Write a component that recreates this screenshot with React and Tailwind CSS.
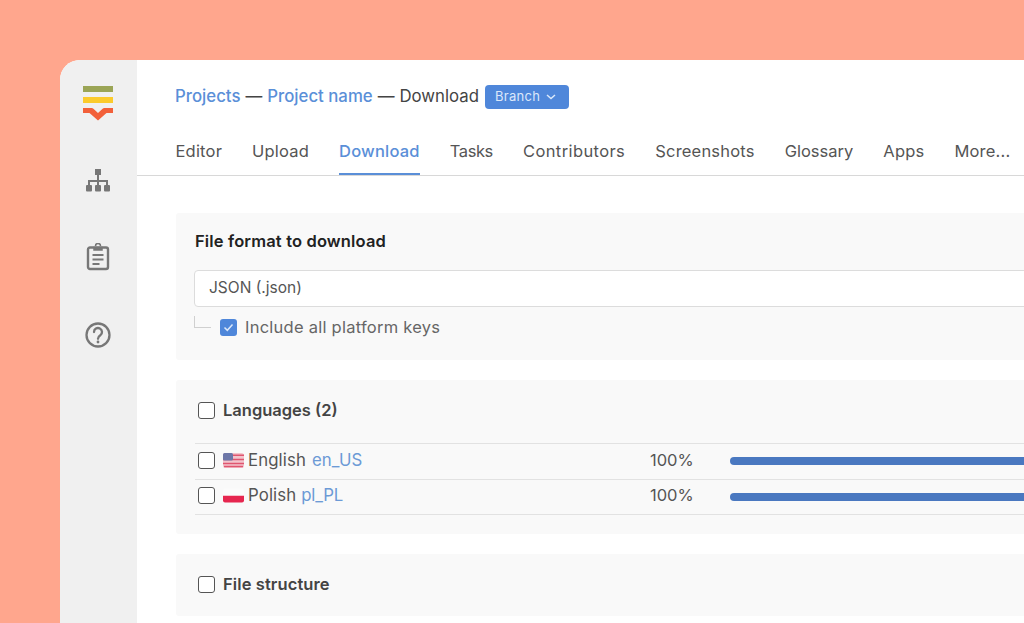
import React from "react";

const Box = () => <span className="block w-[17px] h-[17px] shrink-0 rounded-[3px] border-[1.5px] border-[#555] bg-white" />;

const UsFlag = () => (
  <svg width="21" height="15" viewBox="0 0 21 15" className="shrink-0">
    <rect width="21" height="15" rx="2.5" fill="#f3c4cc" />
    <path d="M0 2.2h21M0 6.5h21M0 10.5h21M1 13.5h19" stroke="#e0556f" strokeWidth="1.4" />
    <rect width="10" height="7.5" rx="1.5" fill="#6d77a8" />
  </svg>
);

const PlFlag = () => (
  <svg width="21" height="15" viewBox="0 0 21 15" className="shrink-0">
    <path d="M0 7.5h21v5a2 2 0 0 1-2 2H2a2 2 0 0 1-2-2z" fill="#e6264f" />
    <path d="M0 7.5v-5a2 2 0 0 1 2-2h17a2 2 0 0 1 2 2v5z" fill="#fbfbfb" />
  </svg>
);

const Row = ({ flag, name, code, codeClass }) => (
  <div className="flex items-center h-[35.5px] pb-[2px] border-b border-[#e2e2e2] text-[16.8px] text-[#555]">
    <div className="w-[455px] flex items-center shrink-0">
      <span className="ml-[3px]"><Box /></span>
      <span className="ml-[8px] mr-[4px] flex">{flag}</span>
      <span className="tracking-[0.1px]">{name}</span>
      <span className={"text-[#6c9ad6] " + codeClass}>{code}</span>
    </div>
    <span className="w-[80px] shrink-0 text-[16.5px] text-[#555]">100%</span>
    <div className="h-[8px] mt-[2px] flex-1 rounded-full bg-[#4a78c0]" />
  </div>
);

const tabs = [
  ["Editor", "tracking-[0.2px]"],
  ["Upload", "tracking-[0.2px]"],
  ["Download", "tracking-[0.2px]"],
  ["Tasks", "tracking-[-0.4px]"],
  ["Contributors", "tracking-[0.4px]"],
  ["Screenshots", "tracking-[0.2px]"],
  ["Glossary", "tracking-[0px]"],
  ["Apps", "tracking-[0.2px]"],
  ["More...", "tracking-[0.2px]"],
];

export default function App() {
  return (
    <div className="w-[1024px] h-[623px] overflow-hidden bg-[#ffa68d] pt-[60px] pl-[60px] [font-family:Inter,'Liberation_Sans',sans-serif]">
      <div className="flex h-[600px] w-[1000px] rounded-tl-[20px] overflow-hidden bg-white">
        <aside className="w-[77px] shrink-0 bg-[#f0f0f0] flex flex-col items-center pt-[25px] pr-[2px]">
          <svg width="32" height="37" viewBox="0 0 32 37">
            <rect x="1" y="1" width="30" height="6" fill="#9ba556" />
            <rect x="1" y="12" width="30" height="6" fill="#fbcb2c" />
            <path d="M1 23h8.5a3 3 0 0 1 2.2 1L16 28l4.3-4a3 3 0 0 1 2.2-1H31v5h-6.5L16 35.5 7.5 28H1z" fill="#f2603a" />
          </svg>
          <svg width="26" height="26" viewBox="0 0 26 26" className="mt-[46px]" fill="#777">
            <rect x="10" y="1" width="6" height="6" />
            <rect x="12" y="6" width="2" height="14" />
            <path d="M3 17v-5h20v5h-2v-3H5v3z" />
            <rect x="1" y="17" width="6" height="6.5" rx="1" />
            <rect x="10" y="17" width="6" height="6.5" rx="1" />
            <rect x="19" y="17" width="6" height="6.5" rx="1" />
          </svg>
          <svg width="26" height="28" viewBox="0 0 26 28" className="mt-[49px]" fill="none" stroke="#777" strokeWidth="2.4">
            <rect x="3" y="4.5" width="20" height="21.5" rx="2" />
            <path d="M9 4.5h8V7H9z" fill="#777" strokeWidth="1.5" />
            <path d="M10.5 3a2.5 2.5 0 0 1 5 0" strokeWidth="1.6" />
            <path d="M7.5 12h11M7.5 16.5h11M7.5 21h7" strokeWidth="2" />
          </svg>
          <svg width="28" height="28" viewBox="0 0 28 28" className="mt-[50px]" fill="none" stroke="#777" strokeWidth="2.3">
            <circle cx="14" cy="14" r="11.5" />
            <path d="M10 11a4 4 0 1 1 6.3 3.3c-1.5 1-2.3 1.7-2.3 3.5" strokeLinecap="round" />
            <circle cx="14" cy="21" r="1.4" fill="#777" stroke="none" />
          </svg>
        </aside>
        <main className="flex-1 min-w-0">
          <header className="h-[116px] border-b border-[#d8d8d8] flex flex-col">
            <div className="pl-[38px] pt-[25px] flex items-center h-[49px] text-[16.8px] text-[#444]">
              <span className="text-[#5a8fd8] font-medium">Projects</span>
              <span className="mx-[5px]">—</span>
              <span className="text-[#5a8fd8] font-medium">Project name</span>
              <span className="mx-[5px]">—</span>
              <span>Download</span>
              <span className="ml-[6px] flex items-center gap-[6px] h-[24px] w-[84px] pl-[10px] rounded-[4px] bg-[#4f87da] text-[13px] text-[#dbe8fa] tracking-[0.3px]">
                Branch
                <svg width="10" height="6" viewBox="0 0 10 6" fill="none" stroke="#dbe8fa" strokeWidth="1.5"><path d="M1 1l4 3.5L9 1" /></svg>
              </span>
            </div>
            <nav className="mt-auto flex pl-[38.5px] gap-[30px] text-[16.5px] text-[#555]">
              {tabs.map(([t, track]) => (
                <span
                  key={t}
                  className={t === "Download"
                    ? "h-[40px] -mb-px pt-[4px] border-b-[2px] border-[#5a8fd8] text-[#5a8fd8] font-medium " + track
                    : "h-[40px] pt-[4px] " + track}
                >
                  {t}
                </span>
              ))}
            </nav>
          </header>
          <div className="pl-[39px] pt-[37px] w-[1000px] flex flex-col gap-[20px]">
            <section className="h-[147px] bg-[#f9f9f9] rounded-[3px] pl-[18px] pt-[17px]">
              <h2 className="ml-[1px] text-[16.5px] leading-[22px] font-semibold text-[#222] tracking-[0.15px]">File format to download</h2>
              <div className="mt-[18px] h-[37px] flex items-center pl-[14px] pb-[2px] bg-white border-[1.5px] border-[#dcdcdc] rounded-[4px] text-[15.5px] text-[#555]">JSON (.json)</div>
              <div className="mt-[5px] flex items-center relative">
                <span className="absolute left-0 top-[4px] w-[17px] h-[12px] border-l border-b border-[#d0d0d0]" />
                <span className="ml-[26px] w-[17px] h-[17px] rounded-[3px] bg-[#4f87da] flex items-center justify-center">
                  <svg width="11" height="9" viewBox="0 0 11 9" fill="none" stroke="#dbe8fa" strokeWidth="1.5"><path d="M1.5 4.5l2.8 2.8L9.5 1.5" /></svg>
                </span>
                <span className="ml-[8px] text-[16.5px] leading-[30px] text-[#666] tracking-[0.25px]">Include all platform keys</span>
              </div>
            </section>
            <section className="h-[154px] bg-[#f9f9f9] rounded-[3px] pl-[19px]">
              <div className="flex items-center h-[64px] pb-[3px] border-b border-[#e2e2e2] pl-[3px] gap-[8px]">
                <Box />
                <span className="text-[16.5px] font-semibold text-[#444]">Languages (2)</span>
              </div>
              <Row flag={<UsFlag />} name="English" code="en_US" codeClass="ml-[6px] tracking-[0.1px]" />
              <Row flag={<PlFlag />} name="Polish" code="pl_PL" codeClass="ml-[5px] tracking-[-0.2px]" />
            </section>
            <section className="h-[62px] pb-[2px] bg-[#f9f9f9] rounded-[3px] pl-[22px] flex items-center gap-[8px]">
              <Box />
              <span className="text-[16.5px] font-semibold text-[#444] tracking-[0.1px]">File structure</span>
            </section>
          </div>
        </main>
      </div>
    </div>
  );
}
